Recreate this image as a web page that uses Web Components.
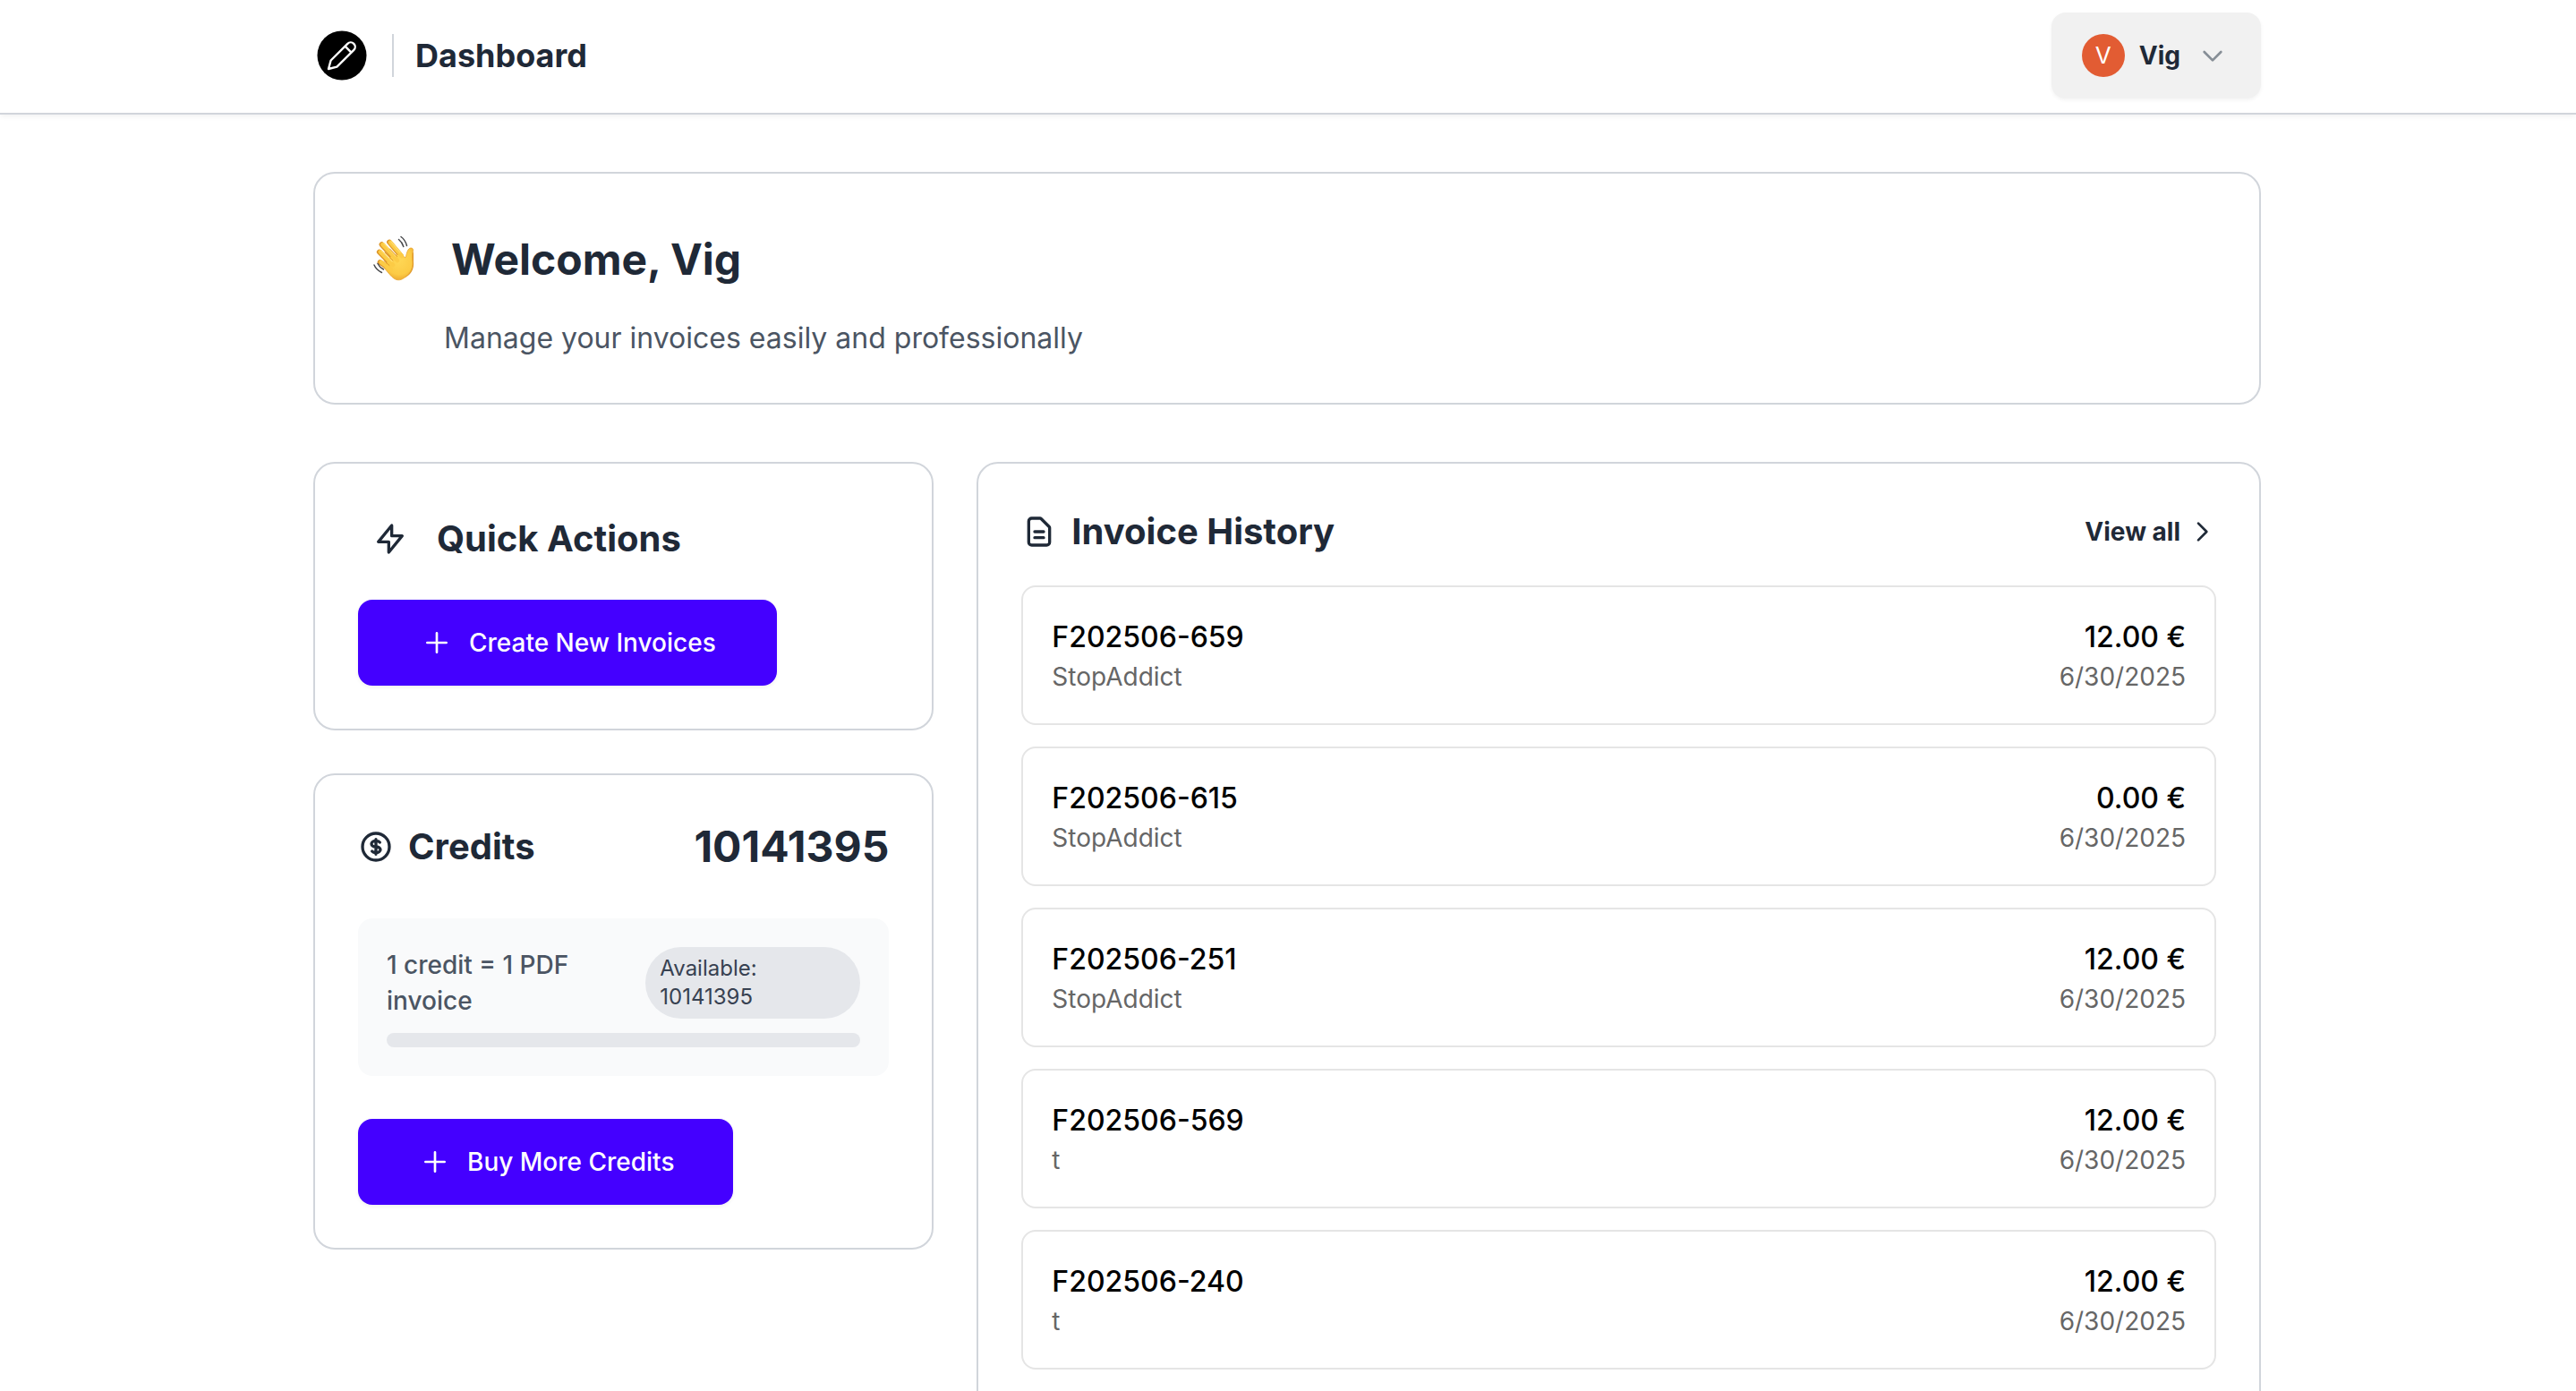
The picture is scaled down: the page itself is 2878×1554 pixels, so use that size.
<!DOCTYPE html>
<html lang="en">
<head>
<meta charset="utf-8">
<title>Dashboard</title>
<style>
html, body { margin: 0; }
body { background: #fff; color: #1f2937; font-family: Inter, "Liberation Sans", sans-serif; font-size: 32px; line-height: 48px; }
</style>
</head>
<body>
<dashboard-page></dashboard-page>
<script>
const ICONS = {
  bolt: 'M13 10V3L4 14h7v7l9-11h-7z',
  doc: 'M9 12h6m-6 4h6m2 5H7a2 2 0 01-2-2V5a2 2 0 012-2h5.586a1 1 0 01.707.293l5.414 5.414a1 1 0 01.293.707V19a2 2 0 01-2 2z',
  dollar: 'M12 8c-1.657 0-3 .895-3 2s1.343 2 3 2 3 .895 3 2-1.343 2-3 2m0-8c1.11 0 2.08.402 2.599 1M12 8V7m0 1v8m0 0v1m0-1c-1.11 0-2.08-.402-2.599-1M21 12a9 9 0 11-18 0 9 9 0 0118 0z',
  plus: 'M12 4v16m8-8H4',
  right: 'M9 5l7 7-7 7',
  down: 'M19 9l-7 7-7-7'
};

function define(name, render) {
  customElements.define(name, class extends HTMLElement {
    connectedCallback() {
      if (this.shadowRoot) return;
      this.attachShadow({ mode: 'open' }).innerHTML = render(this);
    }
  });
}

define('ui-icon', el => `
<style>
:host { display: block; flex: none; width: 40px; height: 40px; }
:host([size="small"]) { width: 32px; height: 32px; }
svg { display: block; width: 100%; height: 100%; }
</style>
<svg viewBox="0 0 24 24" fill="none" stroke="currentColor" stroke-width="2" stroke-linecap="round" stroke-linejoin="round" aria-hidden="true"><path d="${ICONS[el.getAttribute('name')]}"/></svg>`);

define('brand-logo', () => `
<style>
:host { display: block; flex: none; width: 64px; height: 56px; }
svg { display: block; width: 64px; height: 56px; }
</style>
<svg viewBox="0 0 64 56" fill="none" stroke="#fff" stroke-width="2.4" stroke-linejoin="round" stroke-linecap="round" aria-hidden="true">
<circle cx="32" cy="28" r="27.5" fill="#000" stroke="none"/>
<path d="M17 43 19.600 33.500 38.300 14.800a4.900 4.900 0 0 1 7 7L26.400 40.600ZM35.500 17.600l7 7"/>
</svg>`);

define('waving-hand', () => `
<style>
:host { display: block; flex: none; width: 56px; height: 56px; }
svg { display: block; width: 56px; height: 56px; }
</style>
<svg viewBox="0 -1 56 56" fill="none" stroke-linecap="round" stroke-linejoin="round" aria-hidden="true">
<defs><radialGradient id="skin" gradientUnits="userSpaceOnUse" cx="30" cy="28" r="24"><stop offset="0" stop-color="#ffd755"/><stop offset=".65" stop-color="#fccb45"/><stop offset="1" stop-color="#e9a22c"/></radialGradient></defs>
<path d="M21 35C25 42 30 46 34 44.500C40 43 44 37 43 29L43 20.500" stroke="#dd962a" stroke-width="6"/>
<path d="M7.800 18.500 22 33M10.500 10.200 27 28M19 7.500 32 23M8.600 30 20 38" stroke="#dd962a" stroke-width="5.800"/>
<path d="M20 24 31 20.500 37 25C38 22 38.500 18.500 40 16C41.800 13 46.300 13.600 45.500 17C44.300 20.800 44.600 25 45 30C45.500 38 41 45 33 49C27 51.500 23 48 18 42L13 36Z" fill="url(#skin)" stroke="#e9a633" stroke-width=".8"/>
<path d="M8.800 18.500 23 33M11.500 10.200 28 28M20 7.800 33 23M9.800 29.800 21 38" stroke="#fccb45" stroke-width="4.600"/>
<path d="M10 17 22 29M13 9 26 23M21 7 31 19" stroke="#ffda68" stroke-width="1.400"/>
<path d="M14 19 23 28M19.500 15 27.500 23.500M13 28.500 19 33.500" stroke="#df982b" stroke-width="1"/>
<path d="M29.500 4.500C32 6.500 33.800 9 34.800 12.500M32 1.500C35.500 4 37.500 7.500 38.500 11.500M6 31.500C7.500 34.500 9.500 36.500 12.500 38M2 33C3.500 36.500 6.500 39.500 10.500 41.500" stroke="#48494c" stroke-width="1.500"/>
</svg>`);

define('ui-card', () => `
<style>
:host { display: block; box-sizing: border-box; border: 2px solid #d1d5db; border-radius: 24px; padding: 48px; background: #fff; }
</style><slot></slot>`);

define('action-button', el => `
<style>
:host { display: block; }
button { display: flex; align-items: center; gap: 20px; height: 96px; padding: 0 68px 0 72px; border: 0; border-radius: 16px; background: #4400ff; color: #fff; font: 500 28px/40px Inter, "Liberation Sans", sans-serif; box-shadow: 0 2px 4px rgba(0,0,0,.06); white-space: nowrap; cursor: pointer; }
:host([compact]) button { padding: 0 66px 0 70px; }
</style>
<button type="button"><ui-icon name="plus" size="small"></ui-icon><slot></slot></button>`);

define('user-menu', () => `
<style>
:host { display: block; }
button { display: flex; align-items: center; height: 96px; padding: 0 38px 0 34px; border: 0; border-radius: 16px; background: #f1f1f1; color: #1f2937; font: 700 28px/40px Inter, "Liberation Sans", sans-serif; box-shadow: 0 2px 4px rgba(0,0,0,.05); cursor: pointer; }
.avatar { width: 48px; height: 48px; border-radius: 50%; background: #e25c33; color: #fff; font-weight: 400; font-size: 26px; line-height: 48px; text-align: center; margin-right: 16px; }
ui-icon { color: #868e96; margin-left: 20px; }
</style>
<button type="button"><span class="avatar">V</span><slot></slot><ui-icon name="down" size="small"></ui-icon></button>`);

define('page-header', () => `
<style>
:host { display: block; box-sizing: border-box; border-bottom: 2px solid #d1d5db; background: #fff; box-shadow: 0 2px 6px rgba(0,0,0,.06); }
.bar { box-sizing: border-box; max-width: 2304px; margin: 0 auto; padding: 14px 65px 16px 63px; display: flex; align-items: center; justify-content: space-between; }
.left { display: flex; align-items: center; }
.rule { width: 2px; height: 48px; background: #d1d5db; margin: 0 24px; }
h1 { margin: 0; font-size: 36px; line-height: 56px; font-weight: 700; }
</style>
<header class="bar"><div class="left"><brand-logo></brand-logo><span class="rule"></span><h1>Dashboard</h1></div><user-menu>Vig</user-menu></header>`);

define('welcome-card', () => `
<style>
:host { display: block; }
.row { display: flex; align-items: center; gap: 32px; padding: 16px; height: 64px; }
h2 { margin: 0; font-size: 48px; line-height: 64px; font-weight: 700; }
p { margin: 16px 0 0 96px; font-size: 32px; line-height: 48px; color: #4b5563; }
</style>
<ui-card><div class="row"><waving-hand></waving-hand><h2>Welcome, Vig</h2></div><p>Manage your invoices easily and professionally</p></ui-card>`);

define('quick-actions', () => `
<style>
:host { display: block; }
.row { display: flex; align-items: center; gap: 32px; padding: 8px 16px; margin-bottom: 32px; }
h2 { margin: 0; font-size: 40px; line-height: 56px; font-weight: 700; }
</style>
<ui-card><div class="row"><ui-icon name="bolt"></ui-icon><h2>Quick Actions</h2></div><action-button>Create New Invoices</action-button></ui-card>`);

define('credits-card', () => `
<style>
:host { display: block; }
.row { display: flex; align-items: center; gap: 16px; }
h2 { margin: 0; font-size: 40px; line-height: 56px; font-weight: 700; }
strong { margin-left: auto; font-size: 48px; line-height: 64px; font-weight: 700; }
.box { margin: 48px 0; padding: 32px; border-radius: 16px; background: #f9fafb; }
.info { display: flex; align-items: center; justify-content: space-between; }
.rate { width: 224px; font-size: 28px; line-height: 40px; font-weight: 500; color: #4b5563; }
.pill { box-sizing: border-box; width: 240px; padding: 8px 96px 8px 16px; border-radius: 40px; background: #e5e7eb; font-size: 24px; line-height: 32px; color: #374151; }
.track { height: 16px; margin-top: 16px; border-radius: 8px; background: #e5e7eb; }
</style>
<ui-card><div class="row"><ui-icon name="dollar"></ui-icon><h2>Credits</h2><strong>10141395</strong></div>
<div class="box"><div class="info"><span class="rate">1 credit = 1 PDF invoice</span><span class="pill">Available: 10141395</span></div><div class="track"></div></div>
<action-button compact>Buy More Credits</action-button></ui-card>`);

define('invoice-row', el => `
<style>
:host { display: flex; justify-content: space-between; box-sizing: border-box; border: 2px solid #e5e5e5; border-radius: 16px; padding: 32px; }
.end { text-align: right; }
.main { font-size: 32px; line-height: 48px; font-weight: 500; color: #000; }
.sub { font-size: 28px; line-height: 40px; color: #666; }
</style>
<div><div class="main">${el.getAttribute('number')}</div><div class="sub">${el.getAttribute('client')}</div></div>
<div class="end"><div class="main">${el.getAttribute('amount')}</div><div class="sub">${el.getAttribute('date')}</div></div>`);

define('invoice-history', () => `
<style>
:host { display: block; }
.row { display: flex; align-items: center; margin-bottom: 32px; }
h2 { margin: 0 auto 0 16px; font-size: 40px; line-height: 56px; font-weight: 700; }
a { display: flex; align-items: center; gap: 8px; color: #1f2937; text-decoration: none; font-size: 28px; line-height: 40px; font-weight: 700; }
.list { display: flex; flex-direction: column; gap: 24px; }
</style>
<ui-card><div class="row"><ui-icon name="doc"></ui-icon><h2>Invoice History</h2><a href="#">View all<ui-icon name="right" size="small"></ui-icon></a></div>
<div class="list">
<invoice-row number="F202506-659" client="StopAddict" amount="12.00 €" date="6/30/2025"></invoice-row>
<invoice-row number="F202506-615" client="StopAddict" amount="0.00 €" date="6/30/2025"></invoice-row>
<invoice-row number="F202506-251" client="StopAddict" amount="12.00 €" date="6/30/2025"></invoice-row>
<invoice-row number="F202506-569" client="t" amount="12.00 €" date="6/30/2025"></invoice-row>
<invoice-row number="F202506-240" client="t" amount="12.00 €" date="6/30/2025"></invoice-row>
</div></ui-card>`);

define('dashboard-page', () => `
<style>
:host { display: block; }
main { box-sizing: border-box; max-width: 2304px; margin: 0 auto; padding: 64px 65px 0 63px; }
.grid { display: grid; grid-template-columns: repeat(3, minmax(0, 1fr)); gap: 48px; align-items: start; margin-top: 64px; }
.side { display: flex; flex-direction: column; gap: 48px; }
invoice-history { grid-column: span 2; }
</style>
<page-header></page-header>
<main><welcome-card></welcome-card><div class="grid"><div class="side"><quick-actions></quick-actions><credits-card></credits-card></div><invoice-history></invoice-history></div></main>`);
</script>
</body>
</html>
